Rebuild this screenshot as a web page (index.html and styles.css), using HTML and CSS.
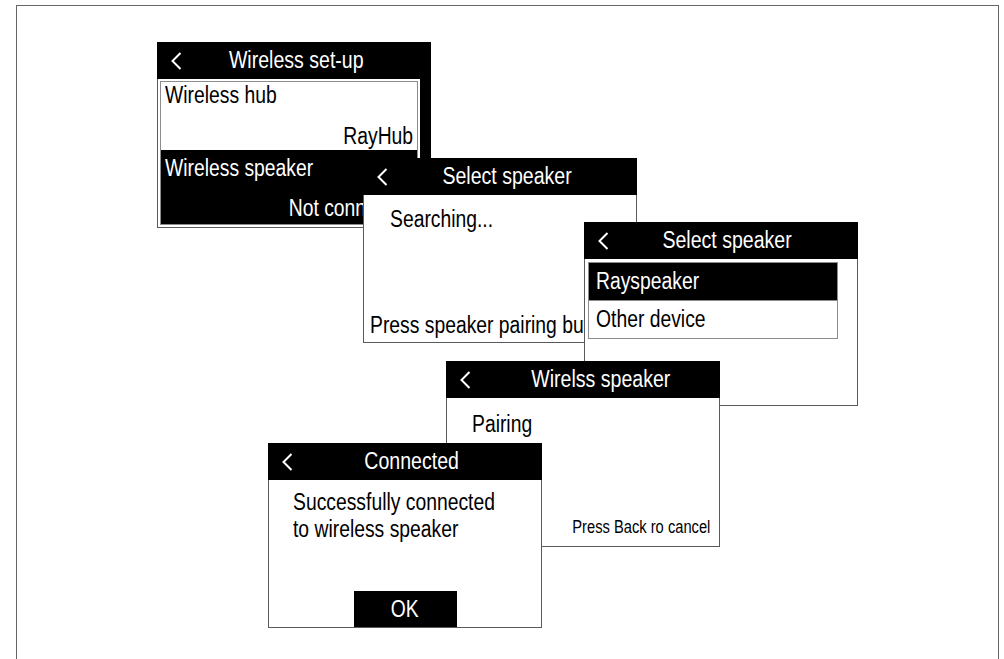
FILE: index.html
```html
<!DOCTYPE html>
<html lang="en">
<head>
    <meta charset="UTF-8">
    <meta name="viewport" content="width=device-width, initial-scale=1.0">
    <title>Wireless speaker set-up</title>
    <link rel="stylesheet" href="styles.css">
</head>
<body>

    <div class="sheet">

        <!-- 1: settings list -->
        <div class="screen screen-setup">
            <div class="bar">
                <svg class="back" width="11" height="18" viewBox="0 0 11 18"><polyline points="9.5,1 1.5,9 9.5,17"/></svg>
                <span class="title"><span class="tx">Wireless set-up</span></span>
            </div>
            <div class="panel panel-list">
                <div class="list">
                    <div class="item item-tall">
                        <span><span class="tx">Wireless hub</span></span>
                        <span class="value"><span class="tx">RayHub</span></span>
                    </div>
                    <div class="item item-tall selected">
                        <span><span class="tx">Wireless speaker</span></span>
                        <span class="value"><span class="tx">Not connected</span></span>
                    </div>
                </div>
                <div class="scrollbar"></div>
            </div>
        </div>

        <!-- 2: searching -->
        <div class="screen screen-search">
            <div class="bar">
                <svg class="back" width="11" height="18" viewBox="0 0 11 18"><polyline points="9.5,1 1.5,9 9.5,17"/></svg>
                <span class="title"><span class="tx">Select speaker</span></span>
            </div>
            <div class="panel">
                <div class="msg"><span class="tx">Searching...</span></div>
                <div class="foot"><span class="tx">Press speaker pairing button</span></div>
            </div>
        </div>

        <!-- 3: pick a speaker -->
        <div class="screen screen-select">
            <div class="bar">
                <svg class="back" width="11" height="18" viewBox="0 0 11 18"><polyline points="9.5,1 1.5,9 9.5,17"/></svg>
                <span class="title"><span class="tx">Select speaker</span></span>
            </div>
            <div class="panel">
                <div class="list">
                    <div class="item selected"><span class="tx">Rayspeaker</span></div>
                    <div class="item"><span class="tx">Other device</span></div>
                </div>
            </div>
        </div>

        <!-- 4: pairing -->
        <div class="screen screen-pairing">
            <div class="bar">
                <svg class="back" width="11" height="18" viewBox="0 0 11 18"><polyline points="9.5,1 1.5,9 9.5,17"/></svg>
                <span class="title"><span class="tx">Wirelss speaker</span></span>
            </div>
            <div class="panel">
                <div class="msg"><span class="tx">Pairing</span></div>
                <div class="hint"><span class="tx">Press Back ro cancel</span></div>
            </div>
        </div>

        <!-- 5: done -->
        <div class="screen screen-done">
            <div class="bar">
                <svg class="back" width="11" height="18" viewBox="0 0 11 18"><polyline points="9.5,1 1.5,9 9.5,17"/></svg>
                <span class="title"><span class="tx">Connected</span></span>
            </div>
            <div class="panel">
                <div class="msg"><span class="tx">Successfully connected<br>to wireless speaker</span></div>
                <div class="ok"><span class="tx">OK</span></div>
            </div>
        </div>

    </div>

</body>
</html>
```

FILE: styles.css
```css
html, body {
    overflow: hidden;
}

body {
    margin: 0;
    background-color: #fff;
    color: #000;
    font-family: "Liberation Sans", Arial, sans-serif;
    font-size: 23px;
    line-height: 27px;
}

/* no narrow face installed, so squeeze the regular one */
.tx {
    display: inline-block;
    white-space: nowrap;
    transform: scaleX(0.84);
    transform-origin: 0 50%;
}

.sheet {
    position: relative;
    width: 981px;
    height: 653px;
    margin: 5px 0 0 16px;
    border: 1px solid #666;
    border-bottom: none;
}

/* each device screen sits at its own spot on the sheet */
.screen {
    position: absolute;
    width: 274px;
    height: 185px;
    display: flex;
    flex-direction: column;
}

.screen-setup   { left: 140px; top: 36px;  height: 186px; }
.screen-search  { left: 346px; top: 152px; }
.screen-select  { left: 567px; top: 216px; height: 184px; }
.screen-pairing { left: 429px; top: 355px; height: 186px; }
.screen-done    { left: 251px; top: 437px; }

.bar {
    position: relative;
    flex: none;
    height: 37px;
    background-color: #000;
    color: #fff;
    display: flex;
    align-items: center;
    justify-content: center;
}

.back {
    position: absolute;
    left: 14px;
    top: 10px;
}

.back polyline {
    fill: none;
    stroke: #fff;
    stroke-width: 2;
}

.title {
    font-size: 23px;
    white-space: nowrap;
}

.title .tx {
    transform: scaleX(0.85);
    transform-origin: 50% 50%;
}

.screen-setup .title   { padding-left: 5px; }
.screen-search .title  { padding-left: 15px; }
.screen-select .title  { padding-left: 13px; }
.screen-pairing .title { padding-left: 36px; }
.screen-done .title    { padding-left: 14px; }

.panel {
    flex: 1;
    min-height: 0;
    background-color: #fff;
    border: 1px solid #5a5a5a;
    border-top: none;
    display: flex;
    flex-direction: column;
    overflow: hidden;
}

/* lists */
.list {
    border: 1px solid #8c8c8c;
    display: flex;
    flex-direction: column;
}

.item {
    height: 37px;
    line-height: 37px;
    padding: 0 7px;
    white-space: nowrap;
}

.item + .item {
    border-top: 1px solid #8c8c8c;
}

.selected {
    background-color: #000;
    color: #fff;
}

.panel-list {
    flex-direction: row;
    padding: 2px 0 2px 2px;
    border-right: none;
}

.panel-list .list {
    flex: 1;
}

.item-tall {
    height: auto;
    flex: 1;
    line-height: 27px;
    padding: 0 4px;
    display: flex;
    flex-direction: column;
    justify-content: space-between;
}

.item-tall.selected {
    padding: 5px 4px 2px;
}

.item-tall + .item-tall {
    border-top: none;
}

.value {
    text-align: right;
}

.value .tx {
    transform-origin: 100% 50%;
}

.scrollbar {
    width: 11px;
    margin: -2px 0 -2px 2px;
    background-color: #000;
}

.screen-select .panel {
    padding: 3px 19px 0 3px;
}

/* messages */
.msg {
    white-space: nowrap;
}

.screen-search .panel {
    padding: 11px 0 0 6px;
}

.screen-search .msg {
    padding-left: 20px;
}

.foot {
    margin-top: auto;
    padding-bottom: 3px;
    white-space: nowrap;
}

.screen-pairing .panel {
    padding: 13px 0 0 25px;
}

.hint {
    margin-top: auto;
    padding: 0 9px 9px 0;
    font-size: 17.5px;
    line-height: 20px;
    text-align: right;
}

.hint .tx {
    transform-origin: 100% 50%;
}

.screen-done .panel {
    padding: 9px 0 0 24px;
}

.ok {
    margin: auto 0 -1px -24px;
    align-self: center;
    width: 103px;
    height: 37px;
    line-height: 37px;
    background-color: #000;
    color: #fff;
    text-align: center;
}

.ok .tx {
    transform-origin: 50% 50%;
}
```
